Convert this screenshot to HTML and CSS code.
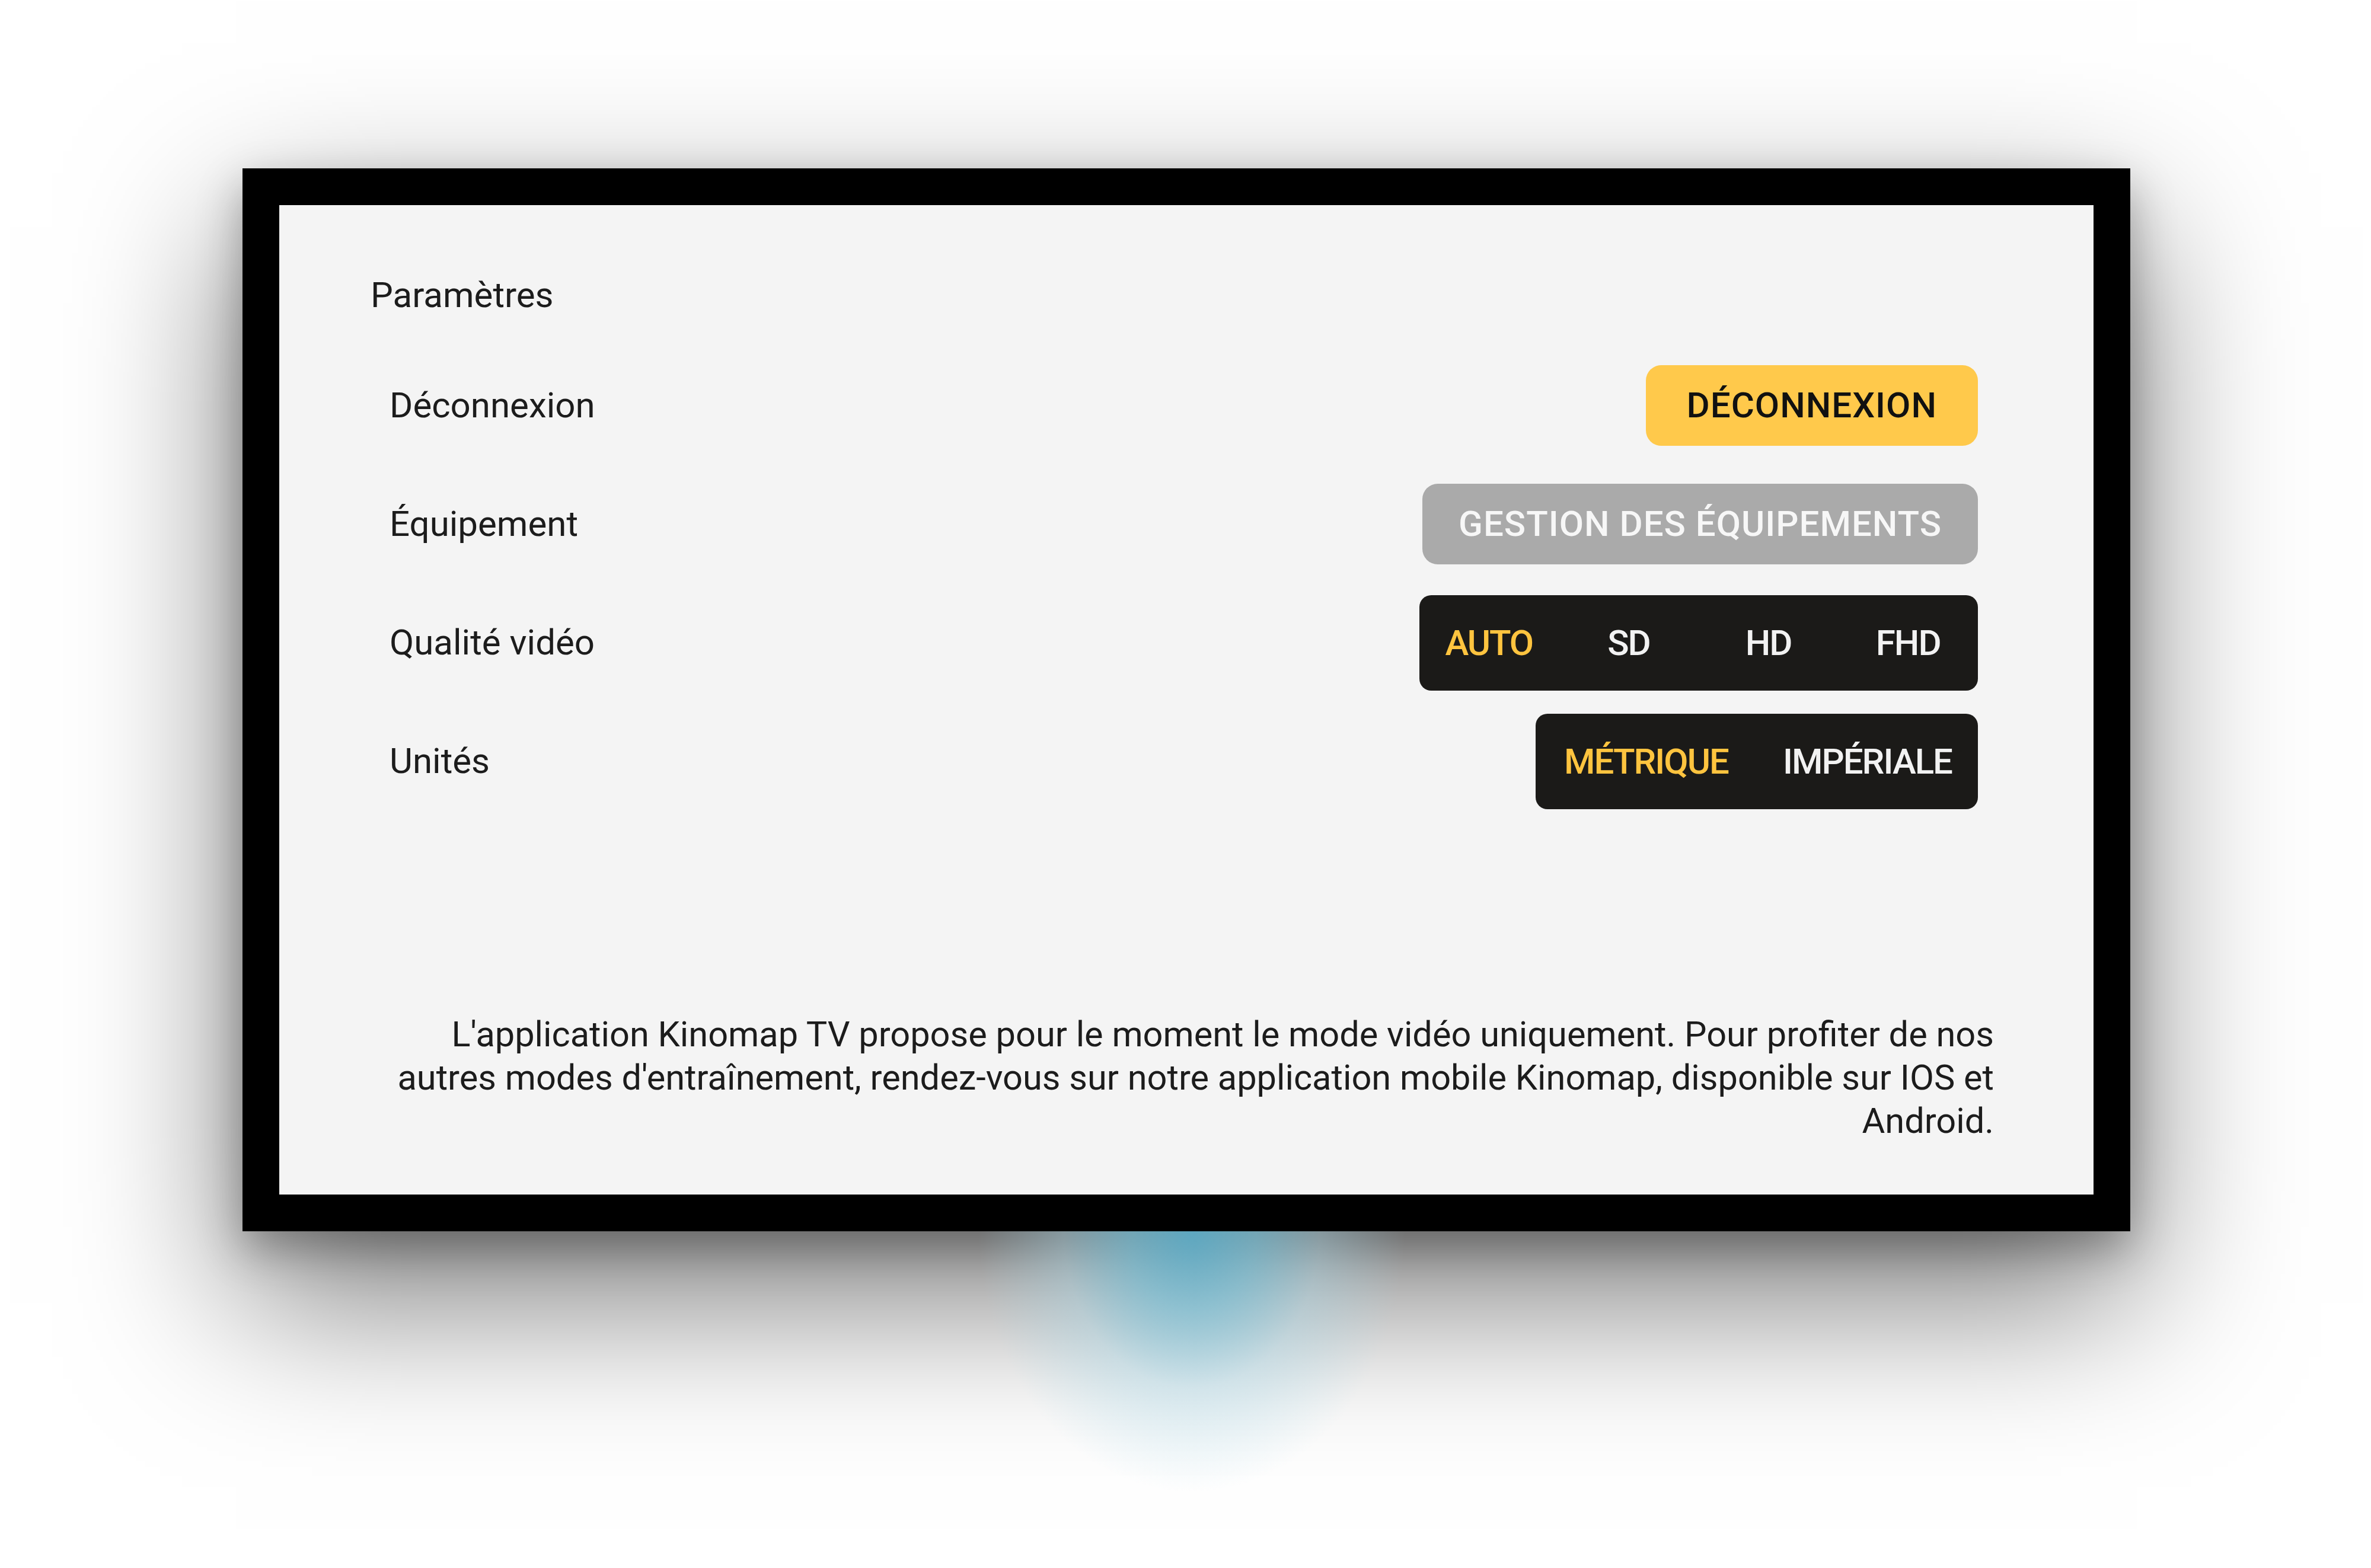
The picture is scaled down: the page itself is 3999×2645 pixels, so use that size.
FILE: index.html
```html
<!DOCTYPE html>
<html lang="fr">
<head>
<meta charset="utf-8">
<title>Paramètres</title>
<link rel="stylesheet" href="styles.css">
</head>
<body>
<div class="stage">
  <div class="glow"></div>
  <div class="tv">
    <div class="screen">
      <h1 class="title">Paramètres</h1>
      <div class="rows">
        <div class="row">
          <span class="label">Déconnexion</span>
          <button class="btn btn-yellow">DÉCONNEXION</button>
        </div>
        <div class="row">
          <span class="label">Équipement</span>
          <button class="btn btn-gray">GESTION DES ÉQUIPEMENTS</button>
        </div>
        <div class="row">
          <span class="label">Qualité vidéo</span>
          <div class="seg">
            <span class="seg-item active">AUTO</span>
            <span class="seg-item">SD</span>
            <span class="seg-item">HD</span>
            <span class="seg-item">FHD</span>
          </div>
        </div>
        <div class="row">
          <span class="label">Unités</span>
          <div class="seg">
            <span class="seg-item active">MÉTRIQUE</span>
            <span class="seg-item">IMPÉRIALE</span>
          </div>
        </div>
      </div>
      <p class="note">L'application Kinomap TV propose pour le moment le mode vidéo uniquement. Pour profiter de nos autres modes d'entraînement, rendez-vous sur notre application mobile Kinomap, disponible sur IOS et Android.</p>
    </div>
  </div>
</div>
</body>
</html>
```

FILE: styles.css
```css
html, body {
  margin: 0;
  padding: 0;
}
body {
  width: 3999px;
  height: 2645px;
  overflow: hidden;
  background: #ffffff;
  font-family: Roboto, "Liberation Sans", sans-serif;
  color: #1c1c1c;
}
.stage {
  position: relative;
  width: 3999px;
  height: 2645px;
  box-sizing: border-box;
  padding: 284px 0 0 409px;
}
.glow {
  position: absolute;
  left: 1640px;
  top: 2077px;
  width: 740px;
  height: 460px;
  background: radial-gradient(ellipse 360px 440px at 50% 0%,
    rgba(90, 176, 205, 0.85) 0%,
    rgba(115, 192, 216, 0.65) 30%,
    rgba(165, 213, 229, 0.38) 60%,
    rgba(220, 238, 245, 0) 100%);
  z-index: 1;
  pointer-events: none;
}
.tv {
  position: relative;
  z-index: 0;
  width: 3184px;
  height: 1793px;
  box-sizing: border-box;
  border: 62px solid #000;
  background: #f4f4f4;
  box-shadow: 0 110px 260px 10px rgba(0, 0, 0, 0.5),
              0 30px 70px rgba(0, 0, 0, 0.3);
}
.screen {
  height: 100%;
  display: flex;
  flex-direction: column;
  box-sizing: border-box;
  padding: 116px 0 87px 0;
}
.title {
  margin: 0 0 0 154px;
  font-size: 60px;
  line-height: 72px;
  font-weight: 400;
  color: #1c1c1c;
}
.rows {
  margin-top: 50px;
  display: flex;
  flex-direction: column;
  padding: 0 195px 0 186px;
}
.row {
  height: 200px;
  display: flex;
  align-items: center;
  justify-content: space-between;
}
.label {
  font-size: 60px;
  line-height: 72px;
  font-weight: 400;
  color: #1c1c1c;
}
.btn {
  border: 0;
  margin: 0;
  font-family: inherit;
  font-size: 60px;
  font-weight: 500;
  letter-spacing: 1px;
  height: 136px;
  border-radius: 26px;
  line-height: 1;
}
.btn-yellow {
  background: #ffc94b;
  color: #111111;
  padding: 0 69px;
}
.btn-gray {
  background: #aaaaaa;
  color: #f7f7f7;
  padding: 0 61px;
}
.seg {
  display: inline-grid;
  grid-auto-flow: column;
  grid-auto-columns: 1fr;
  height: 161px;
  background: #1b1a18;
  border-radius: 20px;
}
.seg-item {
  display: flex;
  align-items: center;
  justify-content: center;
  padding: 0 44px;
  font-size: 60px;
  font-weight: 500;
  letter-spacing: -2px;
  color: #f2f2f2;
  white-space: nowrap;
}
.seg-item.active {
  color: #ffc43f;
}
.note {
  margin: auto 0 0 0;
  padding: 0 168px 0 177px;
  text-align: right;
  font-size: 59.5px;
  line-height: 73px;
  font-weight: 400;
  color: #1c1c1c;
}
```
